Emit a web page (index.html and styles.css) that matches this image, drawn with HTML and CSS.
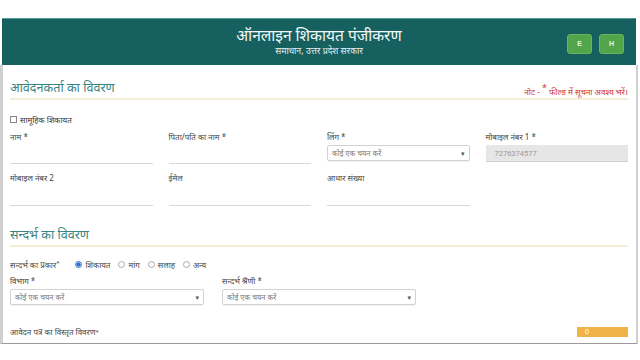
FILE: index.html
```html
<!DOCTYPE html>
<html lang="hi">
<head>
<meta charset="utf-8">
<link rel="stylesheet" href="styles.css">
</head>
<body>
<div class="page">
  <header class="header">
    <div class="spacer"></div>
    <div class="brand">
      <div class="title">ऑनलाइन शिकायत पंजीकरण</div>
      <div class="subtitle">समाधान, उत्तर प्रदेश सरकार</div>
    </div>
    <div class="langs">
      <span class="lang">E</span>
      <span class="lang">H</span>
    </div>
  </header>
  <main class="panel">
    <div class="sec-head">
      <h2 class="sec-title">आवेदनकर्ता का विवरण</h2>
      <div class="note">नोट - <sup>*</sup> फील्ड में सूचना अवश्य भरें।</div>
    </div>
    <label class="check-row"><span class="box"></span>सामूहिक शिकायत</label>
    <div class="grid4">
      <div class="field">
        <div class="lbl">नाम *</div>
        <div class="line-input"></div>
      </div>
      <div class="field">
        <div class="lbl">पिता/पति का नाम *</div>
        <div class="line-input"></div>
      </div>
      <div class="field">
        <div class="lbl">लिंग *</div>
        <div class="select">कोई एक चयन करें <span class="caret">▾</span></div>
      </div>
      <div class="field">
        <div class="lbl">मोबाइल नंबर 1 *</div>
        <div class="disabled">7276374577</div>
      </div>
    </div>
    <div class="grid4 row2">
      <div class="field">
        <div class="lbl">मोबाइल नंबर 2</div>
        <div class="line-input"></div>
      </div>
      <div class="field">
        <div class="lbl">ईमेल</div>
        <div class="line-input"></div>
      </div>
      <div class="field">
        <div class="lbl">आधार संख्या</div>
        <div class="line-input"></div>
      </div>
      <div class="field"></div>
    </div>
    <div class="sec-head sec2">
      <h2 class="sec-title">सन्दर्भ का विवरण</h2>
    </div>
    <div class="radio-row">
      <span class="rlbl">सन्दर्भ का प्रकार<span class="ast">*</span></span>
      <span class="radio on"></span><span>शिकायत</span>
      <span class="radio"></span><span>मांग</span>
      <span class="radio"></span><span>सलाह</span>
      <span class="radio"></span><span>अन्य</span>
    </div>
    <div class="grid3">
      <div class="field">
        <div class="lbl">विभाग *</div>
        <div class="select">कोई एक चयन करें <span class="caret">▾</span></div>
      </div>
      <div class="field">
        <div class="lbl">सन्दर्भ श्रेणी *</div>
        <div class="select">कोई एक चयन करें <span class="caret">▾</span></div>
      </div>
      <div class="field"></div>
    </div>
    <div class="detail-row">
      <span class="lbl">आवेदन पत्र का विस्तृत विवरण<span class="ast">*</span></span>
      <span class="counter">0</span>
    </div>
  </main>
</div>
</body>
</html>
```
FILE: styles.css
```css
* { box-sizing: border-box; }
html, body { margin: 0; padding: 0; background: #fff; }
body { font-family: "Noto Sans", "DejaVu Sans", sans-serif; color: #333; }
.page { padding-top: 18px; width: 640px; }

.header {
  margin: 0 4px 0 2px;
  height: 47px;
  background: #16615f;
  display: grid;
  grid-template-columns: 1fr auto 1fr;
  align-items: center;
  border-top: 1px solid #5c9a98;
}
.brand { text-align: center; color: #fff; padding-bottom: 2px; }
.title { font-size: 15.5px; line-height: 21px; color: #f4f8f8; }
.subtitle { font-size: 8.8px; line-height: 11px; color: #e6efef; }
.langs { justify-self: end; display: flex; gap: 7px; padding-right: 12px; padding-top: 3px; }
.lang {
  width: 25px; height: 20px;
  background: #52a548;
  border: 1px solid #67b45e;
  border-radius: 3px;
  color: #e8f5e4;
  font-size: 7px;
  font-weight: bold;
  display: flex; align-items: center; justify-content: center;
  font-family: "Liberation Sans", sans-serif;
}

.panel {
  width: 638px;
  border-left: 3px solid #cfcfcf;
  border-right: 2px solid #cfcfcf;
  border-bottom: 1px solid #9a9a9a;
  padding: 13px 8px 5px 7px;
}
.sec-head {
  display: flex; justify-content: space-between; align-items: center;
  border-bottom: 2px solid #f2eed8;
  height: 22px;
}
.sec-title { margin: 0; font-weight: normal; font-size: 12.6px; color: #3a8482; line-height: 20px; }
.note { color: #d0312d; font-size: 8.2px; padding-top: 2px; }
.note sup { font-size: 9px; }

.check-row { display: flex; align-items: center; gap: 3px; font-size: 8px; margin-top: 13px; height: 12px; }
.box { width: 7px; height: 7px; border: 1px solid #888; display: inline-block; }

.grid4 { display: grid; grid-template-columns: repeat(4, 1fr); column-gap: 16px; margin-top: 6px; }
.row2 { margin-top: 8px; }
.lbl { font-size: 8px; line-height: 12px; color: #444; }
.line-input { height: 19px; border-bottom: 1px solid #d8d8d8; margin-top: 2px; }
.row2 .line-input { height: 17px; margin-top: 5px; }
.select {
  height: 16px; margin-top: 2px;
  border: 1px solid #d2d2d2;
  border-radius: 2px;
  font-size: 7.5px; color: #777;
  display: flex; justify-content: space-between; align-items: center;
  padding: 0 4px;
  box-shadow: 0 1px 1px rgba(0,0,0,0.06);
}
.caret { font-size: 7px; color: #555; }
.disabled {
  height: 17px; margin-top: 2px;
  background: #e6e6e6;
  border-bottom: 1px solid #d0d0d0;
  font-size: 7.5px; color: #999;
  display: flex; align-items: center; padding-left: 9px;
  font-family: "Roboto", sans-serif;
}

.sec2 { margin-top: 19px; }
.radio-row { display: flex; align-items: center; font-size: 8px; margin-top: 11px; height: 12px; color: #444; }
.rlbl { margin-right: 13px; }
.ast { font-size: 6px; vertical-align: top; }
.radio { width: 7px; height: 7px; border-radius: 50%; border: 1px solid #aaa; display: inline-block; margin: 0 3px 0 8px; }
.radio.on { margin-left: 3px; border-color: #3b73c4; background: radial-gradient(circle, #2f6fd0 55%, #cfe0f7 60%); }

.grid3 { display: grid; grid-template-columns: repeat(3, 1fr); column-gap: 18px; margin-top: 5px; }
.grid3 .select { height: 16px; margin-top: 2px; }

.detail-row { display: flex; justify-content: space-between; align-items: center; margin-top: 21px; height: 12px; }
.counter {
  width: 51px; height: 10px;
  background: #f0b349;
  color: #fff; font-size: 7px;
  padding-left: 8px; line-height: 10px;
  font-family: "Liberation Sans", sans-serif;
}
```
